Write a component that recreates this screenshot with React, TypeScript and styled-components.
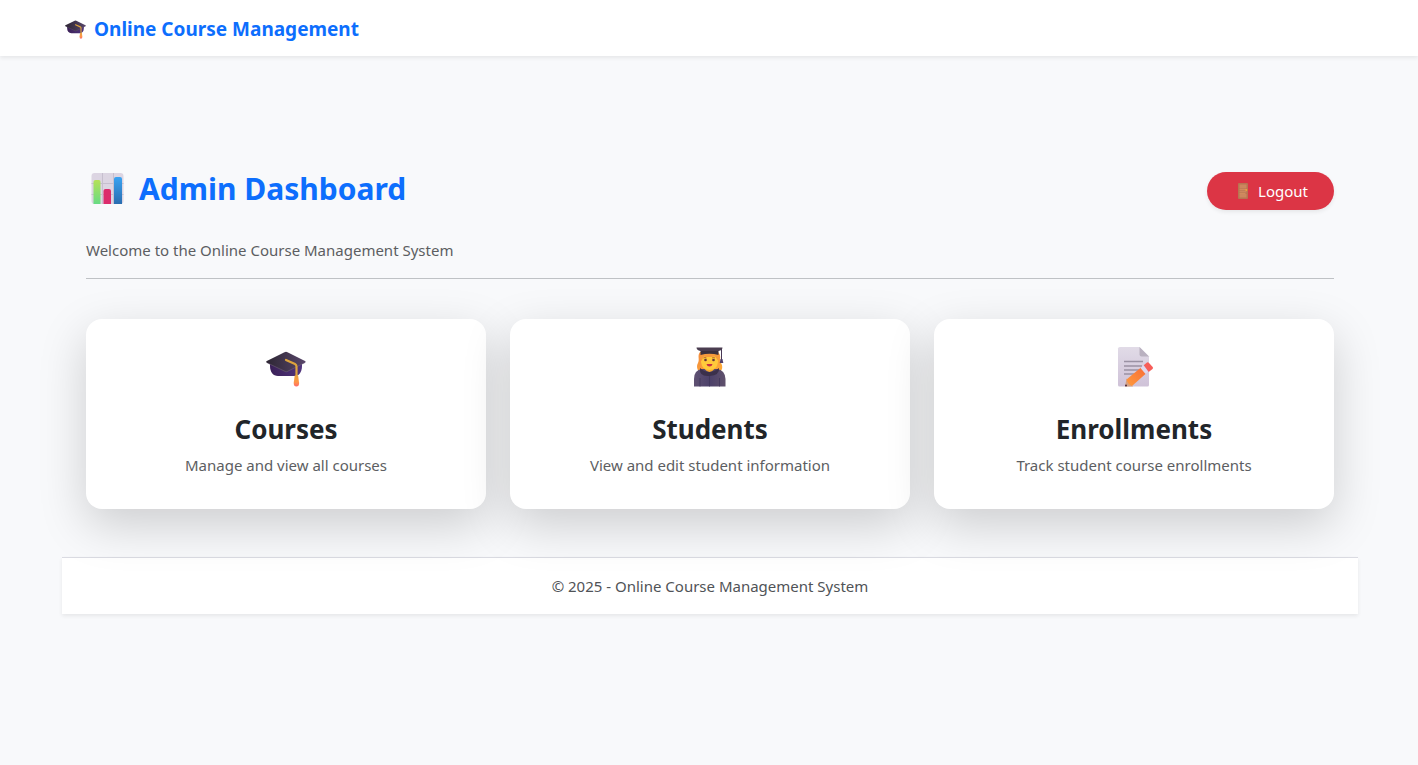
import React from "react";
import styled, { createGlobalStyle } from "styled-components";

const GlobalStyle = createGlobalStyle`
  *, *::before, *::after { box-sizing: border-box; }
  body {
    margin: 0;
    background: #f8f9fb;
    color: #212529;
    font-family: "Segoe UI", "Noto Sans", "Open Sans", sans-serif;
    font-size: 15px;
    line-height: 24px;
  }
  h1, h2, p { margin: 0; }
`;

const Header = styled.header`
  position: relative;
  display: flex;
  align-items: center;
  height: 56px;
  padding: 2px 60px 0 65px;
  background: #fff;
  box-shadow: 0 2px 4px rgba(0, 0, 0, 0.075);
`;

const Brand = styled.a`
  display: flex;
  align-items: center;
  gap: 8px;
  color: #0d6efd;
  font-size: 19px;
  line-height: 30px;
  font-weight: 700;
  text-decoration: none;
`;

const Page = styled.div`
  padding: 96px 60px 48px 62px;
`;

const Main = styled.main`
  padding: 14px 24px 48px;
`;

const TitleRow = styled.div`
  display: flex;
  align-items: flex-end;
  justify-content: space-between;
  padding: 0 0 0 5px;
`;

const Title = styled.h1`
  display: flex;
  align-items: center;
  gap: 15px;
  padding-top: 2px;
  color: #0d6efd;
  font-size: 30px;
  line-height: 42px;
  font-weight: 700;
`;

const LogoutButton = styled.button`
  display: flex;
  align-items: center;
  gap: 8px;
  height: 38px;
  padding: 0 26px 0 30px;
  border: 0;
  border-radius: 19px;
  background: #dc3545;
  color: #fff;
  font: inherit;
  box-shadow: 0 2px 4px rgba(0, 0, 0, 0.075);
  cursor: pointer;
`;

const Welcome = styled.p`
  margin-top: 28px;
  color: #5c5e62;
`;

const Divider = styled.hr`
  height: 1px;
  margin: 16px 0 40px;
  border: 0;
  background: #bfc2c5;
`;

const CardGrid = styled.div`
  display: grid;
  grid-template-columns: repeat(auto-fit, minmax(280px, 1fr));
  gap: 24px;
`;

const Card = styled.a`
  position: relative;
  display: flex;
  flex-direction: column;
  align-items: center;
  padding: 24px 24px 32px;
  border-radius: 16px;
  background: #fff;
  color: #212529;
  text-align: center;
  text-decoration: none;
  box-shadow: 0 16px 48px rgba(0, 0, 0, 0.175);
`;

const CardIcon = styled.div`
  display: flex;
  align-items: flex-end;
  height: 44px;
  margin-bottom: 24px;
`;

const CardTitle = styled.h2`
  margin-bottom: 6px;
  font-size: 26px;
  line-height: 36px;
  font-weight: 700;
`;

const CardText = styled.p`
  color: #5c5e62;
`;

const Footer = styled.footer`
  padding: 16px;
  border-top: 1px solid #dadbe2;
  background: #fff;
  color: #505357;
  text-align: center;
  box-shadow: 0 2px 4px rgba(0, 0, 0, 0.075);
`;

const CapIcon = ({ id, width }: { id: string; width: number }) => (
  <svg width={width} height={Math.round(width * 0.9)} viewBox="0 0 40 36" aria-hidden="true">
    <defs>
      <linearGradient id={`${id}-top`} x1="0" x2="1">
        <stop offset="0" stopColor="#2d2633" />
        <stop offset="1" stopColor="#58466a" />
      </linearGradient>
      <linearGradient id={`${id}-base`} x1="0" x2="1">
        <stop offset="0" stopColor="#3a2057" />
        <stop offset="1" stopColor="#51357e" />
      </linearGradient>
      <linearGradient id={`${id}-tassel`} x1="0" y1="0" x2="0" y2="1">
        <stop offset="0" stopColor="#eaa33c" />
        <stop offset="0.6" stopColor="#ff9548" />
        <stop offset="1" stopColor="#ff6a6e" />
      </linearGradient>
    </defs>
    <path d="M4 11h32v4c0 6-3 10-7 10H12c-5 0-8-4-8-10z" fill={`url(#${id}-base)`} />
    <path d="M18.500 1.200q1.500-.8 3 0l17.500 8.800q1.300.8 0 1.700l-17.700 9q-1.300.6-2.600 0L.8 11.700q-1.300-.9 0-1.700z" fill={`url(#${id}-top)`} />
    <path d="m1.500 12 18 8.600q.8.400 1.600 0L39 11.500" fill="none" stroke="#796785" strokeWidth=".5" />
    <path d="m20 9 9 4q1.500.8 1.500 2.500V26" fill="none" stroke="#dda33d" strokeWidth="2.200" strokeLinecap="round" />
    <path d="M28.700 24.500h3.400l1 7.500q0 3.500-2.700 3.500T27.700 32z" fill={`url(#${id}-tassel)`} />
  </svg>
);

const ChartIcon = () => (
  <svg width="33" height="32" viewBox="0 0 33 32" aria-hidden="true">
    <defs>
      <linearGradient id="bar-green" x1="0" y1="0" x2="0" y2="1">
        <stop offset="0" stopColor="#b5e158" />
        <stop offset="1" stopColor="#68db84" />
      </linearGradient>
      <linearGradient id="bar-blue" x1="0" y1="0" x2="0" y2="1">
        <stop offset="0" stopColor="#39a3f2" />
        <stop offset="1" stopColor="#2a6db0" />
      </linearGradient>
    </defs>
    <rect x=".5" width="32" height="31" rx="3" fill="#dcd5e2" />
    <path d="M.5 10.500h32M.5 21.500h32M11.500 0v31M22.500 0v31" stroke="#c6bfce" strokeWidth="1" />
    <path d="M2.500 31V9Q2.500 7 4.500 7h3.500Q9.500 7 9.500 9v22z" fill="url(#bar-green)" />
    <path d="M12.500 31V18q0-2 2-2h3.500q2 0 2 2v13z" fill="#dc2c6c" />
    <path d="M23 31V6q0-2 2-2h4q2 0 2 2v25z" fill="url(#bar-blue)" />
  </svg>
);

const DoorIcon = () => (
  <svg width="13" height="16" viewBox="0 0 13 16" aria-hidden="true">
    <rect x="1" width="10" height="16" rx="1" fill="#b77551" />
    <path d="M2.500 1.500h7v4h-7zM2.500 7.500h7v2h-7zM2.500 11h7v3.500h-7z" fill="#cc875e" />
    <path d="M2.500 6.500h7M2.500 10.500h6" stroke="#d99061" strokeWidth=".8" />
    <circle cx="9.300" cy="7" r="1" fill="#f2a23a" />
  </svg>
);

const StudentIcon = () => (
  <svg width="34" height="41" viewBox="0 0 34 41" aria-hidden="true">
    <defs>
      <linearGradient id="hair" x1="0" y1="0" x2="1" y2="1">
        <stop offset="0" stopColor="#f28b3d" />
        <stop offset="1" stopColor="#ffad35" />
      </linearGradient>
      <linearGradient id="gown" x1="0" x2="1">
        <stop offset="0" stopColor="#5f5172" />
        <stop offset=".5" stopColor="#4c416a" />
        <stop offset="1" stopColor="#60516c" />
      </linearGradient>
    </defs>
    <path d="M7 6C4 10 7 13 5 17c-2 3-1 9 4 10h16c5-2 5-7 3-10-2-4 1-7-3-11z" fill="url(#hair)" />
    <path d="M1 40.500V33q0-9 8-10h15q8 1 8.500 10v7.500z" fill="url(#gown)" />
    <path d="M7 22q9 8 19 0 1 7-9.500 8T7 22z" fill="#3b304b" />
    <path d="M11.500 19h10v4q-5 6-10 0z" fill="#f6a82f" />
    <path d="M8 10q8-5 17 0v6q-1 8-8.500 8T8 16z" fill="#ffca3b" />
    <path d="M7 9.500q9-5 19 0l-1 5-3-4q-8 1-11 0l-3 5z" fill="#f59a3c" />
    <path d="M10.500 12q1.500-1 3 0M19 12q1.500-1 3 0" fill="none" stroke="#a35d2a" strokeWidth=".8" />
    <circle cx="12.500" cy="14" r="1.300" fill="#66353b" />
    <circle cx="20.500" cy="14" r="1.300" fill="#66353b" />
    <path d="M13.500 18h6q-.5 2.500-3 2.500t-3-2.500z" fill="#c92d44" />
    <path d="M7.500 4h18v5q-9-2.500-18 0z" fill="#39303e" />
    <path d="M3.500 1.500h26q0 2.500-4 3.500h-18Q3.500 4 3.500 1.500z" fill="#4a3d50" />
    <path d="M28.500 3v12" stroke="#473855" strokeWidth="1" />
    <path d="M27.500 13h2l.8 4h-3.600z" fill="#51406a" />
    <path d="M7 32v8.500M26.500 32v8.500M16.500 30v10.500" stroke="#40365a" strokeWidth=".8" />
  </svg>
);

const MemoIcon = () => (
  <svg width="40" height="41" viewBox="-4 0 40 41" aria-hidden="true">
    <defs>
      <linearGradient id="paper" x1="0" y1="0" x2="0" y2="1">
        <stop offset="0" stopColor="#e1dbe7" />
        <stop offset="1" stopColor="#cfc2d8" />
      </linearGradient>
      <linearGradient id="pencil" x1="0" y1="1" x2="1" y2="0">
        <stop offset="0" stopColor="#ff9b3d" />
        <stop offset="1" stopColor="#f86d37" />
      </linearGradient>
    </defs>
    <path d="M2 1h19.500L31 10.500V39q0 1.500-1.500 1.500h-28Q0 40.500 0 39V2.500Q0 1 2 1z" fill="url(#paper)" />
    <path d="M21.500 1 31 10.500h-7.500q-2 0-2-2z" fill="#b9b1c0" />
    <path d="M6 15.500h19M6 20h18M6 24h15M6 28h12" stroke="#9a91a3" strokeWidth="1.300" />
    <path d="m7 40.500 1.500-8 6.500 8z" fill="#d6a182" />
    <path d="m8.500 33.500 14.500-12 5 6-14 12.500q-4-1.500-5.500-6.500z" fill="url(#pencil)" />
    <path d="m22.500 22 3.500-3 4.800 6-3.300 3z" fill="#ded8ef" />
    <path d="m25.700 19.300 3.300-2.700q1-.8 2 .3l3.700 4.100q.8 1-.2 2L30.700 26z" fill="#f75d59" />
    <circle cx="8" cy="39.500" r="1" fill="#49293b" />
  </svg>
);

const cards = [
  { title: "Courses", text: "Manage and view all courses", icon: <CapIcon id="card-cap" width={40} /> },
  { title: "Students", text: "View and edit student information", icon: <StudentIcon /> },
  { title: "Enrollments", text: "Track student course enrollments", icon: <MemoIcon /> },
];

export default function App() {
  return (
    <>
      <GlobalStyle />
      <Header>
        <Brand href="#">
          <CapIcon id="brand-cap" width={21} />
          <span>Online Course Management</span>
        </Brand>
      </Header>
      <Page>
        <Main>
          <TitleRow>
            <Title>
              <ChartIcon />
              <span>Admin Dashboard</span>
            </Title>
            <LogoutButton type="button">
              <DoorIcon />
              <span>Logout</span>
            </LogoutButton>
          </TitleRow>
          <Welcome>Welcome to the Online Course Management System</Welcome>
          <Divider />
          <CardGrid>
            {cards.map((card) => (
              <Card href="#" key={card.title}>
                <CardIcon>{card.icon}</CardIcon>
                <CardTitle>{card.title}</CardTitle>
                <CardText>{card.text}</CardText>
              </Card>
            ))}
          </CardGrid>
        </Main>
        <Footer>© 2025 - Online Course Management System</Footer>
      </Page>
    </>
  );
}
